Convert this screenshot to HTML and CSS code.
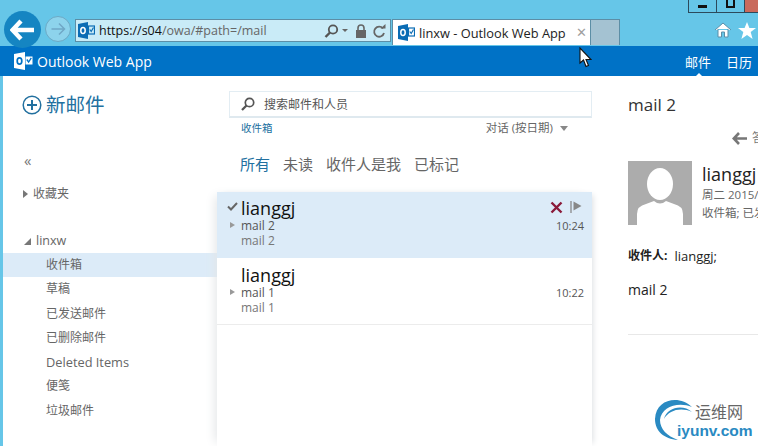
FILE: index.html
```html
<!DOCTYPE html>
<html lang="zh">
<head>
<meta charset="utf-8">
<title>linxw - Outlook Web App</title>
<link rel="stylesheet" href="styles.css">
</head>
<body>
<div class="window">
  <div class="winbtns"><span class="wb"><i class="min"></i></span><span class="wb"><i class="max"></i></span><span class="wb close"></span></div>
  <header class="chrome">
    <button class="back"><svg width="26" height="22" viewBox="0 0 26 22"><path d="M11 2 2.500 11 11 20M3 11H24" fill="none" stroke="#fff" stroke-width="4.400"/></svg></button>
    <button class="fwd"><svg width="16" height="14" viewBox="0 0 16 14"><path d="M9 1.500 14.500 7 9 12.500M14 7H1.500" fill="none" stroke="#6fa8c6" stroke-width="1.500"/></svg></button>
    <div class="addr">
      <svg class="ol" width="17" height="17" viewBox="0 0 17 17"><path d="M0 2 10 0V17L0 15Z" fill="#0a6cb4"/><rect x="10.500" y="4" width="6" height="8" fill="none" stroke="#0a6cb4" stroke-width="1.200"/><path d="M11.800 7.500 13.200 9.500 15.500 5.500" fill="none" stroke="#0a6cb4" stroke-width="1.200"/><ellipse cx="5" cy="8.500" rx="2.200" ry="3" fill="none" stroke="#fff" stroke-width="1.500"/></svg>
      <span class="url"><span class="dk">https://s04</span>/owa/#path=/mail</span>
      <svg class="tools" width="64" height="16" viewBox="0 0 64 16"><circle cx="10" cy="6.500" r="4.200" fill="none" stroke="#555" stroke-width="1.800"/><path d="M7 9.500 2.500 14" stroke="#555" stroke-width="2.400"/><path d="M19 6h6l-3 3z" fill="#666"/><path d="M35 7V5a3 3 0 0 1 6 0V7" fill="none" stroke="#666" stroke-width="1.600"/><rect x="33" y="7" width="10" height="8" fill="#666"/><path d="M60 5.500A5 5 0 1 0 61 10" fill="none" stroke="#666" stroke-width="1.800"/><path d="M57.500 5.500h5V1z" fill="#666"/></svg>
    </div>
    <div class="tab">
      <svg class="ol" width="17" height="17" viewBox="0 0 17 17"><path d="M0 2 10 0V17L0 15Z" fill="#0a6cb4"/><rect x="10.500" y="4" width="6" height="8" fill="none" stroke="#0a6cb4" stroke-width="1.200"/><path d="M11.800 7.500 13.200 9.500 15.500 5.500" fill="none" stroke="#0a6cb4" stroke-width="1.200"/><ellipse cx="5" cy="8.500" rx="2.200" ry="3" fill="none" stroke="#fff" stroke-width="1.500"/></svg>
      <span class="tabtitle">linxw - Outlook Web App</span>
      <span class="tabx">✕</span>
    </div>
    <div class="newtab"></div>
    <div class="chromeicons">
      <svg width="18" height="16" viewBox="0 0 18 16"><path d="M1 8 9 1 17 8M4 7V15H7.500V10H10.500V15H14V7" fill="#fff" stroke="#5b8ea8" stroke-width="1"/></svg>
      <svg width="18" height="17" viewBox="0 0 18 17"><path d="M9 0 11.400 6H18L12.700 10 14.600 17 9 13 3.400 17 5.300 10 0 6H6.600Z" fill="#fff"/></svg>
    </div>
  </header>
  <div class="app">
    <nav class="appbar">
      <svg class="logo" width="19" height="18" viewBox="0 0 19 18"><path d="M0 2 11 0V18L0 16Z" fill="#fff"/><rect x="11.500" y="4.500" width="7" height="8" fill="#fff"/><path d="M12.800 7.500 14.600 10 17.300 5.800" fill="none" stroke="#0072c6" stroke-width="1.300"/><ellipse cx="5.500" cy="9" rx="2.300" ry="3.200" fill="none" stroke="#0072c6" stroke-width="1.700"/></svg>
      <span class="brand">Outlook Web App</span>
      <span class="navlinks"><a class="nav on">邮件</a><a class="nav">日历</a></span>
    </nav>
    <main class="panes">
      <aside class="side">
        <div class="compose"><svg width="20" height="20" viewBox="0 0 20 20"><circle cx="10" cy="10" r="8.800" fill="none" stroke="#22709f" stroke-width="1.500"/><path d="M10 5V15M5 10H15" stroke="#22709f" stroke-width="2"/></svg><span>新邮件</span></div>
        <div class="collapse">«</div>
        <div class="group fav"><i class="tri-r"></i>收藏夹</div>
        <div class="group acct"><i class="tri-d"></i>linxw</div>
        <ul class="folders">
          <li class="sel">收件箱</li><li>草稿</li><li>已发送邮件</li><li>已删除邮件</li><li class="lat">Deleted Items</li><li>便笺</li><li>垃圾邮件</li>
        </ul>
      </aside>
      <section class="list">
        <div class="search"><svg width="16" height="16" viewBox="0 0 16 16"><circle cx="9.500" cy="6.500" r="4.200" fill="none" stroke="#555" stroke-width="1.700"/><path d="M6.500 9.500 2 14" stroke="#555" stroke-width="2.300"/></svg><span>搜索邮件和人员</span></div>
        <div class="crumbs"><span class="inbox">收件箱</span><span class="sort">对话 (按日期)<i class="caret"></i></span></div>
        <div class="filters"><span class="f on">所有</span><span class="f">未读</span><span class="f">收件人是我</span><span class="f">已标记</span></div>
        <div class="msgs">
          <article class="msg cur">
            <svg class="check" width="11" height="9" viewBox="0 0 11 9"><path d="M1 4.500 4 7.500 10 1" fill="none" stroke="#666" stroke-width="2"/></svg>
            <div class="from">lianggj</div>
            <div class="subj"><i class="tri-s"></i>mail 2<span class="time">10:24</span></div>
            <div class="prev">mail 2</div>
            <div class="acts"><svg width="13" height="13" viewBox="0 0 13 13"><path d="M1.500 1.500 11.500 11.500M11.500 1.500 1.500 11.500" stroke="#8a1a3a" stroke-width="2.400"/></svg><svg width="12" height="12" viewBox="0 0 12 12"><path d="M1 0V12" stroke="#888" stroke-width="1.300"/><path d="M3.500 0.500 11.500 5 3.500 9.500Z" fill="#888"/></svg></div>
          </article>
          <article class="msg">
            <div class="from">lianggj</div>
            <div class="subj"><i class="tri-s"></i>mail 1<span class="time">10:22</span></div>
            <div class="prev">mail 1</div>
          </article>
        </div>
      </section>
      <section class="read">
        <h1>mail 2</h1>
        <div class="reply"><svg width="15" height="13" viewBox="0 0 15 13"><path d="M7 1 1.800 6.500 7 12M2 6.500H15" fill="none" stroke="#777" stroke-width="2.600"/></svg><span>答复</span></div>
        <div class="sender">
          <svg class="avatar" width="64" height="64" viewBox="0 0 64 64"><rect width="64" height="64" fill="#acacac"/><path d="M9 64V53Q9 45 18 43L26 40Q32 45 38 40L46 43Q55 45 55 53V64Z" fill="#fff"/><ellipse cx="32" cy="23" rx="13" ry="16" fill="#fff"/></svg>
          <div class="who"><div class="name">lianggj</div><div class="meta">周二 2015/12/8 10:24</div><div class="meta">收件箱; 已发送邮件</div></div>
        </div>
        <div class="to"><b>收件人:</b><span>lianggj;</span></div>
        <div class="body">mail 2</div>
        <hr class="rule">
      </section>
    </main>
  </div>
  <svg class="cursor" width="13" height="21" viewBox="0 0 13 21"><path d="M1 1V16L4.500 13 7 19.500 9.500 18.500 7 12.500H12Z" fill="#fff" stroke="#111" stroke-width="1.100"/></svg>
  <div class="mark">
    <svg width="42" height="44" viewBox="0 0 42 44"><path d="M38 9C26 -3 2 0 1 21 1 33 10 41 24 42 13 38 6 31 6 22 7 9 24 3 38 9Z" fill="#2a8ac2"/><path d="M38 14C29 6 13 9 10 21 15 12 27 9 38 14Z" fill="#2a8ac2"/></svg>
    <span class="cn">运维网</span><span class="en">iyunv.com</span>
  </div>
</div>
</body>
</html>
```
FILE: styles.css
```css
*{box-sizing:border-box}
html,body{margin:0;padding:0;height:100%;overflow:hidden;background:#fff}
body{font-family:"Open Sans","Noto Sans CJK SC",sans-serif}
ul{list-style:none;margin:0;padding:0}
.window{position:relative;width:758px;height:446px;background:#66c6e8;overflow:hidden}
.winbtns{position:absolute;top:0;right:0;display:flex;height:13px;border-bottom:1px solid #2c4a5c}
.wb{width:28px;border-left:1px solid #2c4a5c;display:flex;align-items:flex-end;justify-content:center;padding-bottom:4px}
.wb.close{width:14px;background:#c96a5c}
.min{display:block;width:9px;height:3px;background:#111}
.max{display:block;width:9px;height:8px;border:2px solid #111;border-top:0;margin-bottom:0}
.chrome{height:46px;display:flex;align-items:flex-start;padding:19px 0 0 4px;position:relative}
.back{position:absolute;left:4px;top:11px;width:37px;height:37px;border-radius:50%;background:#1585c2;border:0;padding:0;display:flex;align-items:center;justify-content:center;z-index:2}
.fwd{position:absolute;left:45px;top:16px;width:26px;height:26px;border-radius:50%;background:#8dd3ec;border:1px solid #6ba9c5;padding:0;display:flex;align-items:center;justify-content:center}
.addr{margin-left:71px;width:316px;height:23px;background:#c9ebf7;border:1px solid #5c8ea6;display:flex;align-items:center;padding-left:2px;font-size:12.500px;color:#666}
.ol{flex:none;margin-right:4px}
.url{flex:1;white-space:nowrap}
.dk{color:#111}
.tools{flex:none;margin-right:3px}
.tab{margin-left:1px;width:199px;height:26px;background:#fff;border:1px solid #5c8ea6;border-bottom:0;display:flex;align-items:center;padding-left:5px;font-size:12.800px;color:#222}
.tabtitle{flex:1;white-space:nowrap}
.tabx{color:#a0a0a0;font-size:13px;font-weight:700;margin-right:3px;font-family:"DejaVu Sans",sans-serif}
.newtab{width:29px;height:26px;background:#a4c2d2;border:1px solid #5c8ea6;border-left:0;border-bottom:0}
.chromeicons{position:absolute;right:2px;top:22px;display:flex;gap:6px}
.app{border-left:3px solid #66c6e8;height:400px;background:#fff;display:flex;flex-direction:column}
.appbar{height:30px;background:#0072c6;display:flex;align-items:center;color:#fff;flex:none;margin-left:-3px;padding-left:14px}
.logo{flex:none;margin-right:4px}
.brand{font-size:14px;flex:1}
.navlinks{display:flex;gap:15px;margin-right:6px}
.nav{font-size:13px;color:#fff;position:relative}
.nav.on::after{content:"";position:absolute;left:9px;bottom:-7px;border:5px solid transparent;border-bottom-color:#fff;border-top:0}
.panes{flex:1;display:flex;min-height:0}
.side{width:214px;flex:none;padding-top:19px;color:#666}
.compose{display:flex;align-items:center;gap:4px;padding-left:19px;color:#22709f;font-size:19.500px;line-height:20px}
.collapse{margin:35px 0 0 21px;font-size:15px;line-height:20px;color:#777}
.group{display:flex;align-items:center;font-size:12px;line-height:18px;padding-left:20px;color:#666}
.fav{margin-top:15px}
.acct{margin-top:29px;font-size:12.500px}
.tri-r{width:0;height:0;border:4px solid transparent;border-left:5px solid #777;border-right:0;margin-right:5px}
.tri-d{width:0;height:0;border-left:7px solid transparent;border-bottom:7px solid #777;margin-right:5px;margin-left:1px}
.folders{margin-top:3px}
.folders li{height:24.300px;padding-left:43px;font-size:12px;line-height:24px;color:#666}
.folders .sel{background:#dcebf8}
.folders .lat{font-size:12.800px}
.list{width:379px;flex:none;padding-top:15px;display:flex;flex-direction:column}
.search{margin-left:12px;width:363px;height:27px;border:1px solid #e3edf3;border-bottom:2px solid #dfe9ef;display:flex;align-items:center;gap:8px;padding-left:10px;font-size:12px;color:#555}
.search svg{flex:none}
.crumbs{display:flex;justify-content:space-between;font-size:10.500px;line-height:16px;padding:2px 28px 0 24px;color:#666}
.inbox{color:#22709f}
.sort{font-size:11.500px;display:flex;align-items:center}
.caret{width:0;height:0;border:4px solid transparent;border-top:5px solid #888;border-bottom:0;margin-left:7px}
.filters{display:flex;gap:13px;padding:16px 0 0 23px;font-size:15px;line-height:24px;color:#666}
.f.on{color:#22709f}
.msgs{margin-top:16px;flex:1;box-shadow:-6px 0 10px -4px #e4e6e8,4px 0 6px -3px #dcdfe2;margin-right:4px;background:#fff}
.msg{height:67px;position:relative;padding:7px 8px 0 24px;border-bottom:1px solid #ececec}
.msg.cur{background:#dcebf8;height:66px;border-bottom:0;padding-top:6px}
.check{position:absolute;left:10px;top:10px}
.from{font-size:18px;line-height:20px;color:#111}
.subj{font-size:12px;line-height:15px;color:#555;position:relative}
.prev{font-size:12px;line-height:16px;color:#777}
.tri-s{position:absolute;left:-11px;top:4px;width:0;height:0;border:3.500px solid transparent;border-left:5px solid #999;border-right:0}
.time{position:absolute;right:0;top:0;font-size:11px;color:#555}
.acts{position:absolute;right:10px;top:9px;display:flex;gap:7px}
.read{flex:1;min-width:0;padding:17px 0 0 32px;color:#333;overflow:hidden}
h1{margin:0;font-size:17px;font-weight:400;line-height:24px;color:#333}
.reply{display:flex;align-items:center;gap:5px;white-space:nowrap;margin:13px 0 0 104px;font-size:12px;line-height:16px;color:#777;height:16px}
.reply svg{flex:none}
.sender{display:flex;gap:10px;margin-top:15px}
.avatar{flex:none}
.who{white-space:nowrap;padding-top:1px}
.name{font-size:18px;line-height:24px;color:#222}
.meta{font-size:11.500px;line-height:18px;color:#666}
.to{font-size:13px;line-height:18px;margin-top:22px;color:#222;display:flex;gap:7px}
.to b{font-weight:700;font-size:12px}
.body{font-size:14px;line-height:20px;margin-top:15px;color:#222}
.rule{border:0;border-top:1px solid #e8e8e8;margin:34px 0 0}
.cursor{position:absolute;left:579px;top:47px}
.mark{position:absolute;left:654px;top:396px;width:104px;height:48px}
.mark svg{position:absolute;left:0;top:2px}
.cn{position:absolute;left:41px;top:5px;font-size:16px;line-height:22px;color:#666}
.en{position:absolute;left:23px;top:24px;font-size:15.500px;line-height:22px;font-weight:700;color:#2a8ac2;font-family:"Liberation Sans",sans-serif}
```
